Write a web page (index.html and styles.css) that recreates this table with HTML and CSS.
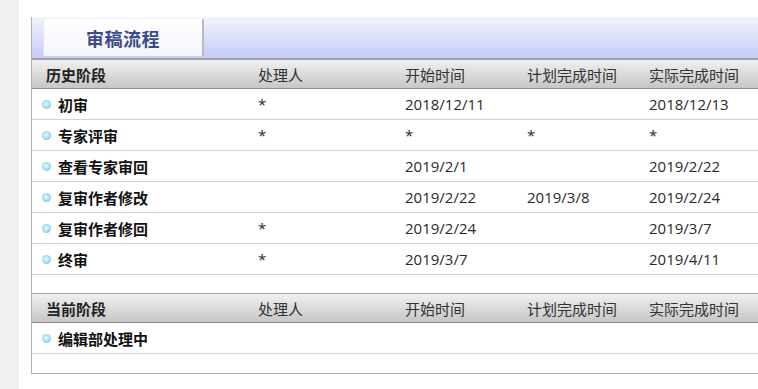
FILE: index.html
```html
<!DOCTYPE html>
<html lang="zh-CN">
<head>
<meta charset="utf-8">
<title>审稿流程</title>
<link rel="stylesheet" href="styles.css">
</head>
<body>
<div class="page">
  <div class="side"></div>
  <div class="main">
    <div class="panel">
      <div class="banner">
        <div class="tab">审稿流程</div>
      </div>
      <div class="grid head first">
        <div class="c1">历史阶段</div><div>处理人</div><div>开始时间</div><div>计划完成时间</div><div>实际完成时间</div>
      </div>
      <div class="grid row">
        <div class="c1"><span class="dot"></span>初审</div><div>*</div><div>2018/12/11</div><div></div><div>2018/12/13</div>
      </div>
      <div class="grid row">
        <div class="c1"><span class="dot"></span>专家评审</div><div>*</div><div>*</div><div>*</div><div>*</div>
      </div>
      <div class="grid row">
        <div class="c1"><span class="dot"></span>查看专家审回</div><div></div><div>2019/2/1</div><div></div><div>2019/2/22</div>
      </div>
      <div class="grid row">
        <div class="c1"><span class="dot"></span>复审作者修改</div><div></div><div>2019/2/22</div><div>2019/3/8</div><div>2019/2/24</div>
      </div>
      <div class="grid row">
        <div class="c1"><span class="dot"></span>复审作者修回</div><div>*</div><div>2019/2/24</div><div></div><div>2019/3/7</div>
      </div>
      <div class="grid row">
        <div class="c1"><span class="dot"></span>终审</div><div>*</div><div>2019/3/7</div><div></div><div>2019/4/11</div>
      </div>
      <div class="gap"></div>
      <div class="grid head second">
        <div class="c1">当前阶段</div><div>处理人</div><div>开始时间</div><div>计划完成时间</div><div>实际完成时间</div>
      </div>
      <div class="grid row">
        <div class="c1"><span class="dot"></span>编辑部处理中</div><div></div><div></div><div></div><div></div>
      </div>
      <div class="blank"></div>
    </div>
  </div>
</div>
</body>
</html>
```
FILE: styles.css
```css
html, body {
  margin: 0;
  padding: 0;
  background: #fff;
  overflow: hidden;
}
body {
  font-family: "Open Sans", "Noto Sans CJK SC", sans-serif;
  font-size: 15px;
  color: #333;
}
.page {
  display: flex;
  width: 758px;
  height: 389px;
  overflow: hidden;
}
.side {
  width: 19px;
  flex: none;
  background: #f0f0f0;
}
.main {
  flex: none;
  padding: 17px 0 0 12px;
}
.panel {
  width: 760px;
  border-left: 1px solid #b4b4b4;
  border-bottom: 1px solid #b4b4b4;
}
.banner {
  height: 41px;
  background: linear-gradient(#f3f4fd, #c4cbf8);
  display: flex;
  align-items: center;
  padding-left: 11px;
}
.tab {
  width: 158px;
  height: 37px;
  background: linear-gradient(#ffffff, #f4f5fb);
  border-right: 2px solid #b8bac8;
  border-left: 1px solid #e4e6f4;
  color: #3b4a8c;
  font-family: "Noto Sans CJK SC", sans-serif;
  font-weight: bold;
  font-size: 18px;
  display: flex;
  align-items: center;
  justify-content: center;
  letter-spacing: 0.5px;
}
.grid {
  display: grid;
  grid-template-columns: 226px 147px 122px 122px 1fr;
  align-items: center;
}
.head {
  height: 28px;
  background: linear-gradient(#f0f0f0, #c6c6c6);
  border-top: 2px solid #a4a4a4;
  border-bottom: 1px solid #8c8c8c;
  color: #333;
}
.head.second {
  border-top: 1px solid #a4a4a4;
}
.head .c1 {
  padding-left: 14px;
  font-weight: bold;
  color: #222;
}
.row {
  height: 30px;
  border-bottom: 1px solid #d2d2d2;
  color: #2a2a2a;
}
.row .c1 {
  padding-left: 10px;
  font-weight: bold;
  color: #111;
  display: flex;
  align-items: center;
  font-family: "Noto Sans CJK SC", sans-serif;
}
.dot {
  width: 9px;
  height: 9px;
  border-radius: 50%;
  margin-right: 7px;
  background: radial-gradient(circle at 45% 45%, #eafaff 0%, #a8e2f6 45%, #58b0dc 100%);
}
.gap {
  height: 18px;
}
.blank {
  height: 19px;
}
```
